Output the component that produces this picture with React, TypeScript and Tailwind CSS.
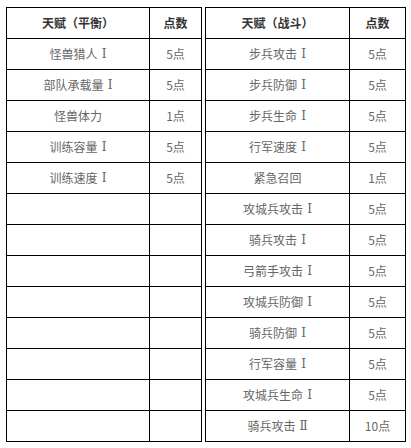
const left: [string, string][] = [
  ["怪兽猎人Ⅰ", "5点"],
  ["部队承载量Ⅰ", "5点"],
  ["怪兽体力", "1点"],
  ["训练容量Ⅰ", "5点"],
  ["训练速度Ⅰ", "5点"],
  ["", ""],
  ["", ""],
  ["", ""],
  ["", ""],
  ["", ""],
  ["", ""],
  ["", ""],
  ["", ""],
];

const right: [string, string][] = [
  ["步兵攻击Ⅰ", "5点"],
  ["步兵防御Ⅰ", "5点"],
  ["步兵生命Ⅰ", "5点"],
  ["行军速度Ⅰ", "5点"],
  ["紧急召回", "1点"],
  ["攻城兵攻击Ⅰ", "5点"],
  ["骑兵攻击Ⅰ", "5点"],
  ["弓箭手攻击Ⅰ", "5点"],
  ["攻城兵防御Ⅰ", "5点"],
  ["骑兵防御Ⅰ", "5点"],
  ["行军容量Ⅰ", "5点"],
  ["攻城兵生命Ⅰ", "5点"],
  ["骑兵攻击Ⅱ", "10点"],
];

// roman numerals render in a serif face, like the reference
function Name({ text }: { text: string }) {
  const m = text.match(/^(.*?)([ⅠⅡ])$/);
  if (!m) return <>{text}</>;
  return (
    <>
      {m[1]}
      <span
        className="ml-[4px]"
        style={{ fontFamily: '"DejaVu Serif", "Liberation Serif", serif' }}
      >
        {m[2]}
      </span>
    </>
  );
}

function TalentTable({
  title,
  rows,
  cols,
}: {
  title: string;
  rows: [string, string][];
  cols: string;
}) {
  const cell =
    "flex h-[31px] items-center justify-center border-r border-b border-black";
  return (
    <div className={`grid ${cols} content-start border-t border-l border-black`}>
      <div className={`${cell} font-bold text-[#333]`}>{title}</div>
      <div className={`${cell} font-bold text-[#333]`}>点数</div>
      {rows.map(([name, pts], i) => (
        <div key={i} className="contents">
          <div className={`${cell} text-[#666]`}>
            <Name text={name} />
          </div>
          <div className={`${cell} text-[#666]`}>{pts}</div>
        </div>
      ))}
    </div>
  );
}

export default function App() {
  return (
    <div
      className="flex h-[448px] w-[411px] items-start gap-[3px] bg-white pt-[7px] pl-[6px] text-[12px]"
      style={{ fontFamily: '"Noto Sans CJK SC", "Noto Sans", sans-serif' }}
    >
      <TalentTable title="天赋（平衡）" rows={left} cols="grid-cols-[143px_52px]" />
      <TalentTable title="天赋（战斗）" rows={right} cols="grid-cols-[144px_56px]" />
    </div>
  );
}
